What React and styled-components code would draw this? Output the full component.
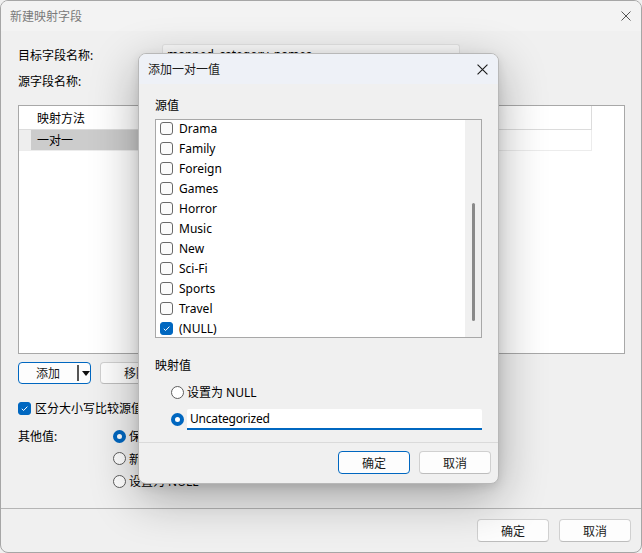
import React from 'react';
import styled, { createGlobalStyle } from 'styled-components';

const GlobalStyle = createGlobalStyle`
  html, body {
    margin: 0;
    padding: 0;
    background: #f0f0f0;
  }
  body {
    font-family: "Noto Sans", "Noto Sans CJK SC", sans-serif;
    font-size: 12px;
    color: #000;
  }
  * {
    box-sizing: border-box;
  }
`;

const Window = styled.div`
  position: relative;
  width: 642px;
  height: 553px;
  border: 1px solid #a6a6a6;
  border-radius: 8px;
  background: #f0f0f0;
  display: flex;
  flex-direction: column;
  overflow: hidden;
`;

const TitleBar = styled.div`
  height: 30px;
  flex: none;
  display: flex;
  align-items: center;
  justify-content: space-between;
  padding: 0 10px 0 9px;
  background: ${(p) => (p.active ? '#eef1f7' : '#f3f3f3')};
  color: ${(p) => (p.active ? '#1a1a1a' : '#7a7a7a')};
`;

const CloseIcon = ({ color = '#333', size = 10 }) => (
  <svg width={size} height={size} viewBox="0 0 10 10">
    <path d="M0.5 0.5 L9.5 9.5 M9.5 0.5 L0.5 9.5" stroke={color} strokeWidth="1" fill="none" />
  </svg>
);

const Body = styled.div`
  flex: 1;
  padding: 13px 16px 0 17px;
  display: flex;
  flex-direction: column;
`;

const FieldRow = styled.div`
  display: flex;
  align-items: center;
  height: 21px;
  margin-bottom: ${(p) => p.mb || 0}px;
`;

const FieldLabel = styled.div`
  width: 144px;
  flex: none;
`;

const TextInput = styled.div`
  width: 298px;
  height: 21px;
  background: #f9f9f9;
  border: 1px solid #e2e2e2;
  border-bottom-color: #8a8a8a;
  border-radius: 3px;
  padding: 0 4px;
  display: flex;
  align-items: center;
`;

const Table = styled.div`
  margin-top: 14px;
  height: 249px;
  background: #fff;
  border: 1px solid #a8a8a8;
`;

const TRow = styled.div`
  display: flex;
  height: ${(p) => p.h}px;
`;

const RowHead = styled.div`
  width: 12px;
  flex: none;
  background: ${(p) => (p.gray ? '#eeeeee' : '#fff')};
  border-bottom: 1px solid ${(p) => (p.head ? '#dcdcdc' : '#ececec')};
`;

const Cell = styled.div`
  width: ${(p) => p.w}px;
  flex: none;
  display: flex;
  align-items: center;
  padding-left: 6px;
  background: ${(p) => (p.selected ? '#cccccc' : '#fff')};
  border-bottom: 1px solid ${(p) => (p.head ? '#dcdcdc' : '#ececec')};
  border-right: 1px solid ${(p) => (p.head ? '#dcdcdc' : '#ececec')};
`;

const ButtonRow = styled.div`
  display: flex;
  gap: 9px;
  margin-top: 8px;
`;

const Button = styled.div`
  width: ${(p) => p.w || 72}px;
  height: ${(p) => p.h || 23}px;
  display: flex;
  align-items: center;
  justify-content: center;
  background: #fdfdfd;
  border: 1px solid ${(p) => (p.primary ? '#0067c0' : '#d0d0d0')};
  border-bottom-color: ${(p) => (p.primary ? '#0067c0' : '#bdbdbd')};
  border-radius: 4px;
  color: #1a1a1a;
`;

const SplitButton = styled.div`
  width: 73px;
  height: 22px;
  display: flex;
  align-items: center;
  background: #fdfdfd;
  border: 1px solid #0067c0;
  border-radius: 4px;
  color: #1a1a1a;
`;

const SplitMain = styled.div`
  width: 58px;
  text-align: center;
`;

const SplitDivider = styled.div`
  width: 2px;
  height: 16px;
  background: #555;
`;

const Arrow = styled.div`
  margin-left: 3px;
  width: 0;
  height: 0;
  border-left: 4px solid transparent;
  border-right: 4px solid transparent;
  border-top: 5px solid #111;
`;

const CheckRow = styled.label`
  display: flex;
  align-items: center;
  height: 20px;
  gap: 4px;
  margin-top: ${(p) => p.mt || 0}px;
  padding-left: ${(p) => p.pl || 0}px;
`;

const Box = styled.span`
  width: 13px;
  height: 13px;
  flex: none;
  border-radius: 3px;
  border: 1px solid ${(p) => (p.checked ? '#0067c0' : '#6a6a6a')};
  background: ${(p) => (p.checked ? '#0067c0' : '#fbfbfb')};
  display: flex;
  align-items: center;
  justify-content: center;
`;

const Check = ({ checked }) => (
  <Box checked={checked}>
    {checked && (
      <svg width="9" height="9" viewBox="0 0 9 9">
        <path d="M1.8 4.8 L3.6 6.5 L7.4 2.6" stroke="#fff" strokeWidth="1" fill="none" />
      </svg>
    )}
  </Box>
);

const RadioCircle = styled.span`
  width: 13px;
  height: 13px;
  flex: none;
  border-radius: 50%;
  border: ${(p) => (p.checked ? '4px solid #0067c0' : '1px solid #5e5e5e')};
  background: #fff;
`;

const OtherGrid = styled.div`
  display: grid;
  grid-template-columns: 95px 1fr;
  grid-auto-rows: 22.5px;
  margin-top: 7px;
  align-items: center;
`;

const RadioRow = styled.div`
  display: flex;
  align-items: center;
  gap: 3px;
  grid-column: 2;
  height: ${(p) => p.h || 20}px;
  margin-top: ${(p) => p.mt || 0}px;
  padding-left: ${(p) => p.pl || 0}px;
`;

const Footer = styled.div`
  height: 44px;
  flex: none;
  border-top: 1px solid #b5b5b5;
  display: flex;
  justify-content: flex-end;
  align-items: flex-start;
  gap: 10px;
  padding: 10px 10px 0 0;
`;

const Dialog = styled.div`
  position: absolute;
  left: 137px;
  top: 52px;
  width: 361px;
  height: 431px;
  background: #f0f0f0;
  border: 1px solid #b8b8b8;
  border-radius: 8px;
  overflow: hidden;
  display: flex;
  flex-direction: column;
  box-shadow: 0 14px 48px rgba(0, 0, 0, 0.32), 0 3px 10px rgba(0, 0, 0, 0.1);
`;

const DialogBody = styled.div`
  flex: 1;
  padding: 14px 16px 0 16px;
  display: flex;
  flex-direction: column;
`;

const SectionLabel = styled.div`
  height: 16px;
  line-height: 16px;
  margin-top: ${(p) => p.mt || 0}px;
`;

const ListBox = styled.div`
  margin-top: 5px;
  height: 219px;
  border: 1px solid #a8a8a8;
  background: #fff;
  display: flex;
  overflow: hidden;
`;

const ListItems = styled.div`
  flex: 1;
  margin-top: -2px;
  padding-left: 4px;
`;

const ListItem = styled.div`
  height: 20px;
  display: flex;
  align-items: center;
  gap: 6px;
`;

const ScrollTrack = styled.div`
  width: 16px;
  flex: none;
  background: #f0f0f0;
  position: relative;
`;

const ScrollThumb = styled.div`
  position: absolute;
  left: 7px;
  top: 83px;
  width: 3px;
  height: 118px;
  border-radius: 2px;
  background: #8a8a8a;
`;

const ValueInput = styled.div`
  width: 295px;
  height: 21px;
  background: #fff;
  border-bottom: 2px solid #0067c0;
  border-radius: 2px 2px 0 0;
  padding-left: 3px;
  display: flex;
  align-items: center;
  letter-spacing: -0.2px;
`;

const DialogFooter = styled.div`
  height: 41px;
  flex: none;
  border-top: 1px solid #dadada;
  display: flex;
  justify-content: flex-end;
  gap: 9px;
  padding: 8px 7px 0 0;
`;

const genres = ['Drama', 'Family', 'Foreign', 'Games', 'Horror', 'Music', 'New', 'Sci-Fi', 'Sports', 'Travel', '(NULL)'];

export default function App() {
  return (
    <>
      <GlobalStyle />
      <Window>
        <TitleBar>
          <span>新建映射字段</span>
          <CloseIcon color="#555" />
        </TitleBar>
        <Body>
          <FieldRow mb={5}>
            <FieldLabel>目标字段名称:</FieldLabel>
            <TextInput>mapped_category_names</TextInput>
          </FieldRow>
          <FieldRow>
            <FieldLabel>源字段名称:</FieldLabel>
          </FieldRow>
          <Table>
            <TRow h={24}>
              <RowHead head />
              <Cell head w={150}>映射方法</Cell>
              <Cell head w={411}>值</Cell>
            </TRow>
            <TRow h={21}>
              <RowHead gray />
              <Cell selected w={150}>一对一</Cell>
              <Cell w={411} />
            </TRow>
          </Table>
          <ButtonRow>
            <SplitButton>
              <SplitMain>添加</SplitMain>
              <SplitDivider />
              <Arrow />
            </SplitButton>
            <Button h={22}>移除</Button>
          </ButtonRow>
          <CheckRow mt={14}>
            <Check checked />
            <span>区分大小写比较源值</span>
          </CheckRow>
          <OtherGrid>
            <span>其他值:</span>
            <RadioRow>
              <RadioCircle checked />
              <span>保留源值</span>
            </RadioRow>
            <RadioRow>
              <RadioCircle />
              <span>新值</span>
            </RadioRow>
            <RadioRow>
              <RadioCircle />
              <span>设置为 NULL</span>
            </RadioRow>
          </OtherGrid>
        </Body>
        <Footer>
          <Button>确定</Button>
          <Button>取消</Button>
        </Footer>

        <Dialog>
          <TitleBar active>
            <span>添加一对一值</span>
            <CloseIcon color="#1a1a1a" size={11} />
          </TitleBar>
          <DialogBody>
            <SectionLabel>源值</SectionLabel>
            <ListBox>
              <ListItems>
                {genres.map((g) => (
                  <ListItem key={g}>
                    <Check checked={g === '(NULL)'} />
                    <span>{g}</span>
                  </ListItem>
                ))}
              </ListItems>
              <ScrollTrack>
                <ScrollThumb />
              </ScrollTrack>
            </ListBox>
            <SectionLabel mt={20}>映射值</SectionLabel>
            <RadioRow pl={16} mt={8}>
              <RadioCircle />
              <span>设置为 NULL</span>
            </RadioRow>
            <RadioRow pl={16} mt={7} h={21}>
              <RadioCircle checked />
              <ValueInput>Uncategorized</ValueInput>
            </RadioRow>
          </DialogBody>
          <DialogFooter>
            <Button primary>确定</Button>
            <Button>取消</Button>
          </DialogFooter>
        </Dialog>
      </Window>
    </>
  );
}
